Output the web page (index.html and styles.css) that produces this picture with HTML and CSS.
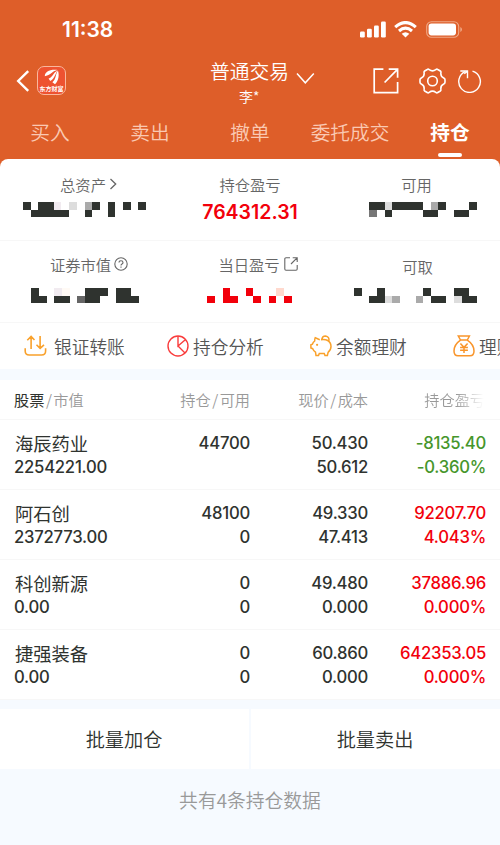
FILE: index.html
```html
<!DOCTYPE html>
<html lang="zh-CN">
<head>
<meta charset="utf-8">
<title>普通交易</title>
<link rel="stylesheet" href="styles.css">
</head>
<body>
<header class="header">
  <div class="status">
    <span class="time">11:38</span>
    <div class="status-icons">
      <svg width="26" height="17" viewBox="0 0 26 17" fill="#fff"><rect x="0" y="10.5" width="4.8" height="6" rx="1.2"/><rect x="7" y="7.8" width="4.8" height="8.7" rx="1.2"/><rect x="14" y="4.5" width="4.8" height="12" rx="1.2"/><rect x="21" y="0.5" width="4.8" height="16" rx="1.2"/></svg>
      <svg class="wifi" width="23" height="17" viewBox="0 0 23 17" fill="none" stroke="#fff" stroke-width="3.1"><path d="M1.2 6.1Q11.5 -3 21.8 6.1"/><path d="M5 10Q11.5 4.4 18 10"/><path d="M7.7 12.8Q11.5 9.6 15.3 12.8L11.5 16.6Z" fill="#fff" stroke="none"/></svg>
      <svg class="battery" width="37" height="17" viewBox="0 0 37 17"><rect x=".7" y=".7" width="32" height="15.6" rx="4.8" fill="none" stroke="#f0a987" stroke-width="1.1"/><rect x="2.6" y="2.6" width="27.4" height="11.8" rx="2.8" fill="#fff"/><path d="M34.3 6Q36 6.8 36 8.5T34.3 11Z" fill="#f0a987"/></svg>
    </div>
  </div>
  <div class="titlebar">
    <div class="left">
      <svg width="14" height="22" viewBox="0 0 14 22" fill="none" stroke="#fff" stroke-width="2.4"><path d="M12.2 1.2L2.2 11L12.2 20.8"/></svg>
      <div class="logo">
        <svg width="16" height="17" viewBox="0 0 16 17" fill="#fff"><path d="M.8 7.2C.9 3 5.5.2 13.5 1C8.6 1.8 7.7 5.5.8 7.2Z"/><path d="M4.6 9.4C8.9 8.3 8.9 3.6 13.6 1.4C11.2 4.3 11 9.2 6.2 12.1Z"/><path d="M8.4 13.3C12.1 10.8 11.4 5 13.9 1.6C15.3 5.6 15 11.6 11 15.2Z"/></svg>
        <span>东方财富</span>
      </div>
    </div>
    <div class="title">
      <div class="name">普通交易<svg width="19" height="13" viewBox="0 0 19 13" fill="none" stroke="#fff" stroke-width="1.5"><path d="M1 1.5L9.3 10.8L17.8 1.5"/></svg></div>
      <div class="user">李*</div>
    </div>
    <div class="actions">
      <svg width="26" height="26" viewBox="0 0 26 26" fill="none" stroke="#fff" stroke-width="1.7"><path d="M10.4 1.2H1.2V24.7H24.6V14"/><path d="M15.7 1.2H24.6V9.8M24.2 1.6L11.6 14.5"/></svg>
      <svg class="gear" width="27" height="26" viewBox="0 0 27 26" fill="none" stroke="#fff" stroke-width="1.6"><path d="M8.2 1.5Q9.2.8 10.2 1.6Q13.5 4.2 16.8 1.6Q17.8.8 18.8 1.5L21.3 3Q22.2 3.7 21.9 4.8Q21.4 8.5 24.7 10Q26 10.7 26 11.8V14.2Q26 15.3 24.7 16Q21.4 17.5 21.9 21.2Q22.2 22.3 21.3 23L18.8 24.5Q17.8 25.2 16.8 24.4Q13.5 21.8 10.2 24.4Q9.2 25.2 8.2 24.5L5.7 23Q4.8 22.3 5.1 21.2Q5.6 17.5 2.3 16Q1 15.3 1 14.2V11.8Q1 10.7 2.3 10Q5.6 8.5 5.1 4.8Q4.8 3.7 5.7 3Z"/><circle cx="13.5" cy="13" r="4.8"/></svg>
      <svg class="reload" width="24" height="24" viewBox="0 0 24 24" fill="none" stroke="#fff" stroke-width="1.4"><path d="M14.5 2.2A10.8 10.8 0 1 1 7.2 2.7"/><path d="M2.3 2H9.5V9.2M9.3 2.2L6.3 4.8"/></svg>
    </div>
  </div>
  <nav class="tabs">
    <span>买入</span><span>卖出</span><span>撤单</span><span>委托成交</span><span class="active">持仓</span>
  </nav>
</header>

<main>
<section class="summary">
  <div class="cell"><div class="label left-label">总资产<svg width="8" height="12" viewBox="0 0 8 12" fill="none" stroke="#666" stroke-width="1.3"><path d="M1.5 1L6.7 6L1.5 11"/></svg></div>
    <svg class="mosaic m1" viewBox="0 0 16 2"><path d="M0 0h1v1H0zM2 0h2v1h2v1H1V1h1zM9 0h1v1H9v1H8V1h1zM11 0h1v2h-1zM13 0h1v1h-1zM15 0h1v1h-1z" fill="#2f332f"/><path d="M4 0h1v1H4z" fill="#f1ebf0"/><path d="M6 0h1v1H6z" fill="#ddd"/><path d="M8 0h1v1H8z" fill="#aaa"/></svg></div>
  <div class="cell"><div class="label">持仓盈亏</div><div class="profit">764312.31</div></div>
  <div class="cell"><div class="label">可用</div>
    <svg class="mosaic m3" viewBox="0 0 14 2"><path d="M0 0h2v1H0zM2 1h1v1H2zM3 0h4v1H3zM7 1h2v1H7zM9 0h1v1H9zM11 1h2v1h-2zM13 0h1v1h-1z" fill="#2f332f"/><path d="M2 0h1v1H2z" fill="#ddd"/><path d="M8 0h1v1H8z" fill="#aaa"/><path d="M0 1h1v1H0z" fill="#777"/></svg></div>
  <div class="cell low"><div class="label sec">证券市值<svg class="help" width="14" height="14" viewBox="0 0 14 14" fill="none" stroke="#666" stroke-width="1.1"><circle cx="7" cy="7" r="6.2"/><path d="M5 5.6Q5 3.7 7 3.7T9 5.4Q9 6.4 8 6.9Q7 7.4 7 8.5M7 9.5V10.7"/></svg></div>
    <svg class="mosaic m4" viewBox="0 0 14 2"><path d="M0 0h1v1h1v1H0zM3 1h2v1H3zM7 0h3v1H9v1H7zM11 0h2v1h1v1h-3z" fill="#2f332f"/><path d="M3 0h1v1H3z" fill="#f1ebf0"/><path d="M4 0h1v1H4z" fill="#fffaf5"/><path d="M6 1h1v1H6z" fill="#666"/></svg></div>
  <div class="cell low"><div class="label day">当日盈亏<svg width="14" height="14" viewBox="0 0 14 14" fill="none" stroke="#666" stroke-width="1.1"><path d="M6 .8H2Q.8.8.8 2V12Q.8 13.2 2 13.2H12Q13.2 13.2 13.2 12V8M8.7.8H13.2V5M12.8 1.2L7 7"/></svg></div>
    <svg class="mosaic m5" viewBox="0 0 11 2"><path d="M0 1h1v1H0zM2 0h1v1h1v1H2zM5 0h1v1H5zM6 1h1v1H6zM8 1h1v1H8zM10 1h1v1h-1z" fill="#f2000b"/><path d="M9 0h1v1H9z" fill="#ffd9ce"/></svg></div>
  <div class="cell low"><div class="label take">可取</div>
    <svg class="mosaic m6" viewBox="0 0 16 2"><path d="M0 0h1v1H0zM3 0h1v2H2V1h1zM9 0h1v1H9zM10 1h2v1h-2zM13 0h2v1h1v1h-2V1h-1z" fill="#2f332f"/><path d="M4 1h1v1H4zM13 1h1v1h-1z" fill="#ddd"/><path d="M5 1h1v1H5zM8 1h1v1H8z" fill="#aaa"/></svg></div>
</section>

<section class="tools">
  <div class="tool"><svg width="23" height="22" viewBox="0 0 23 22" fill="none" stroke="#f9a12b" stroke-width="1.6"><path d="M7.1 14V1.5M3.3 5.3L7.1 1.5L10.5 5M16.1 1V13M12.5 9.8L16.1 13.3L20 9.8M1.2 13.2V16Q1.2 20 5.2 20H17.6Q21.6 20 21.6 16V13.2"/></svg><span>银证转账</span></div>
  <div class="tool"><svg width="22" height="22" viewBox="0 0 22 22" fill="none" stroke="#f93c3c" stroke-width="1.4"><circle cx="11" cy="11" r="10"/><path d="M11 1V11L18.6 4.5M11 11L18 18"/></svg><span>持仓分析</span></div>
  <div class="tool"><svg width="22" height="22" viewBox="0 0 22 22" fill="none" stroke="#f9a12b" stroke-width="1.5"><path d="M9.8 4.7Q7.5 4 5.2 2.7Q4.6 4 4.7 6Q3 7.3 2.4 9.2L.9 9.7V13L2.7 13.7Q3.5 15.7 5.5 17.1L6 20.5H8.5L9.3 18.5H14.2L15 20.5H17.4L18.1 17.4Q21 15 21 11.5Q21 7.4 17.7 5.5Q15.5 4.3 11 4.7M11.8 4.6Q12.2 1 15.5 1Q19.7 1.5 18.9 6.3"/><circle cx="7.1" cy="9.8" r="1.1" fill="#f9a12b" stroke="none"/></svg><span>余额理财</span></div>
  <div class="tool"><svg width="22" height="22" viewBox="0 0 22 22" fill="none" stroke="#f9952b" stroke-width="1.5"><path d="M5.3 1H16.4L14.3 5.1H7.5ZM7.5 5.1Q1 9.5 1 16Q1 20.8 5 20.8H17Q21 20.8 21 16Q21 9.5 14.3 5.1M7.4 8.4L11 12.3L14.6 8.4M7.1 12.4H14.9M7.1 15.2H14.9M11 12.3V18"/></svg><span>理财</span></div>
</section>

<section class="table">
  <div class="row head"><div><b>股票</b><i>/</i>市值</div><div>持仓<i>/</i>可用</div><div>现价<i>/</i>成本</div><div class="fade">持仓盈亏</div></div>
  <div class="row"><div><span class="stock">海辰药业</span><span>2254221.00</span></div><div><span>44700</span></div><div><span>50.430</span><span>50.612</span></div><div class="down"><span>-8135.40</span><span>-0.360%</span></div></div>
  <div class="row"><div><span class="stock">阿石创</span><span>2372773.00</span></div><div><span>48100</span><span>0</span></div><div><span>49.330</span><span>47.413</span></div><div class="up"><span>92207.70</span><span>4.043%</span></div></div>
  <div class="row"><div><span class="stock">科创新源</span><span>0.00</span></div><div><span>0</span><span>0</span></div><div><span>49.480</span><span>0.000</span></div><div class="up"><span>37886.96</span><span>0.000%</span></div></div>
  <div class="row"><div><span class="stock">捷强装备</span><span>0.00</span></div><div><span>0</span><span>0</span></div><div><span>60.860</span><span>0.000</span></div><div class="up"><span>642353.05</span><span>0.000%</span></div></div>
</section>
<section class="batch"><div>批量加仓</div><div>批量卖出</div></section>
<footer>共有4条持仓数据</footer>
</main>
</body>
</html>
```
FILE: styles.css
```css
* { box-sizing: border-box; }
body {
  margin: 0;
  width: 500px;
  height: 845px;
  overflow: hidden;
  background: #f6faff;
  color: #2f332f;
  font-family: "Noto Sans CJK SC", sans-serif;
  font-weight: 350;
}
svg { display: block; flex: none; }
.header { height: 167px; background: #de5e29; color: #fff; }
.status {
  height: 60px;
  padding: 0 37px 0 62px;
  display: flex;
  align-items: center;
  justify-content: space-between;
}
.time { font: 600 21px/24px Inter, sans-serif; letter-spacing: 0; }
.status-icons { display: flex; align-items: center; padding-bottom: 1px; }
.wifi { margin-left: 8px; }
.battery { margin-left: 9px; }
.titlebar {
  height: 50px;
  padding: 0 18px 0 16px;
  display: grid;
  grid-template-columns: 160px 1fr 160px;
}
.left { display: flex; align-items: center; gap: 7px; height: 41px; }
.logo {
  width: 29px;
  height: 29px;
  border: 1px solid #f9b79d;
  border-radius: 7px;
  background: #ee5230;
  display: flex;
  flex-direction: column;
  align-items: center;
  padding-top: 2px;
}
.logo span { font: 700 6px/8px "Noto Sans CJK SC", sans-serif; white-space: nowrap; margin-top: -1px; }
.title { padding-left: 34px; }
.name { display: flex; gap: 7px; font-size: 19.8px; line-height: 21px; white-space: nowrap; }
.name svg { margin-top: 12px; }
.user { font-size: 14px; line-height: 20px; padding: 1px 0 0 29px; }
.actions { display: flex; align-items: center; justify-content: flex-end; height: 41px; }
.gear { margin-left: 20px; }
.reload { margin-left: 12px; }
.tabs { display: grid; grid-template-columns: repeat(5, 100px); height: 49px; }
.tabs span { text-align: center; font-size: 19.7px; line-height: 44px; color: #fac9b3; }
.tabs .active { color: #fff; font-weight: 600; display: flex; flex-direction: column; align-items: center; }
.active::after { content: ""; width: 24px; height: 4px; border-radius: 2px; background: #fff; margin-top: -1px; flex: none; }
main { margin-top: -8px; }
.summary {
  background: #fff;
  border-radius: 8px 8px 0 0;
  display: grid;
  grid-template-columns: 167px 166px 167px;
  grid-template-rows: 82px 82px;
}
.cell { border-bottom: 1px solid #f7f7f7; padding-top: 13px; }
.label { font-size: 15.3px; line-height: 24px; color: #666; display: flex; align-items: center; justify-content: center; }
.low { padding-top: 11px; }
.left-label { gap: 3px; padding-left: 10px; }
.sec { gap: 3px; padding-left: 11px; }
.day { gap: 4px; padding-left: 16px; }
.take { padding: 2px 0 0 2px; }
.mosaic { height: 15.4px; margin-top: 6.2px; shape-rendering: crispEdges; }
.m1 { width: 123px; margin-left: 23px; }
.m3 { width: 108px; margin-left: 36px; }
.m4 { width: 108px; margin: 11.7px 0 0 31px; }
.m5 { width: 85px; margin: 11.7px 0 0 40px; }
.m6 { width: 123px; margin: 9.7px 0 0 21px; }
.profit { font: 600 19.5px/24px Inter, sans-serif; color: #f2000b; text-align: center; margin-top: 4px; }
.tools { height: 46px; background: #fff; display: flex; overflow: hidden; padding-left: 24px; }
.tool { display: flex; align-items: center; gap: 7px; width: 143px; flex: none; font-size: 17.7px; color: #555; white-space: nowrap; }
.tool + .tool { gap: 4px; }
.table { margin-top: 11px; background: #fff; height: 320px; }
.row {
  height: 70px;
  padding: 11px 14px 0;
  display: grid;
  grid-template-columns: 120px 116px 118px 118px;
  border-bottom: 1px solid #f7f7f7;
  font: 500 16.7px/24px Inter, "Noto Sans CJK SC", sans-serif;
  letter-spacing: -0.25px;
}
.row > div { text-align: right; }
.row > div:first-child { text-align: left; }
.row span { display: block; }
.row .stock { font: 400 18.3px/24px "Noto Sans CJK SC", sans-serif; letter-spacing: 0; padding-left: 1px; }
.up { color: #f2000b; }
.down { color: #46962b; }
.head { height: 40px; padding-top: 7px; font: 350 15.2px/24px "Noto Sans CJK SC", sans-serif; letter-spacing: 0; color: #999; }
.head b { font-weight: 400; color: #2f332f; }
.head i { font-style: normal; padding: 0 1.5px; }
.head .fade { padding-right: 1px; color: transparent; background: linear-gradient(90deg, #999 75%, #fff 98%); background-clip: text; -webkit-background-clip: text; }
.batch { margin-top: 9px; height: 59px; display: grid; grid-template-columns: 1fr 1fr; gap: 2px; }
.batch div { background: #fff; text-align: center; font-size: 19.2px; line-height: 60px; font-weight: 350; padding-right: 1px; }
footer { text-align: center; font-size: 18.8px; line-height: 28px; color: #999; padding-top: 18px; font-weight: 350; }
```
